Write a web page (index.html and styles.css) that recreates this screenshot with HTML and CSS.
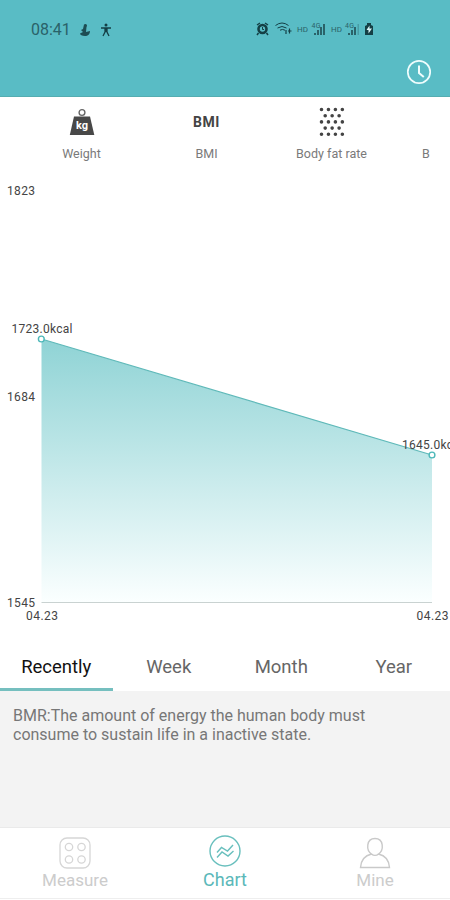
FILE: index.html
```html
<!DOCTYPE html>
<html lang="en">

<head>
    <meta charset="UTF-8">
    <meta name="viewport" content="width=device-width, initial-scale=1">
    <title>Chart</title>
    <link rel="stylesheet" href="styles.css">
</head>

<body>

    <header class="header">
        <div class="status-bar">
            <div class="status-left">
                <span class="time">08:41</span>
                <svg width="12" height="14" viewBox="0 0 12 14">
                    <path d="M5 1.5c2-1.500 4 .5 2.500 2.500L7 9l4-1c0 3-2 5-5 5s-5-1-5-2.500L4 9l-2-2 2-1z" fill="#1d4d53" />
                </svg>
                <svg class="person" width="12" height="14" viewBox="0 0 12 14">
                    <circle cx="6" cy="2" r="1.500" fill="#143f45" />
                    <path d="M1 5h10M6 5v4M5 5v4l-2 4M7 5v4l2 4" fill="none" stroke="#143f45" stroke-width="1.300" />
                </svg>
            </div>
            <div class="status-right">
                <svg width="120" height="16" viewBox="0 0 120 16">
                    <g fill="none" stroke="#143f45">
                        <circle cx="7.500" cy="8" r="4" stroke-width="2.600" />
                        <path d="M2 4l3-2M10 2l3 2M3.500 12L2 14M11.500 12l1.500 2" stroke-width="1.500" />
                        <path d="M7.500 6v2.500H9" stroke-width="1" />
                        <path d="M20.500 4.500q6.500-5 13 0M22.500 7q4.500-3 9 0M25 9.200q2.500-1.500 5 0" stroke-width="1" />
                        <path d="M31 9v4M34.500 7.500v5M33 10h3.500" stroke-width="1.200" />
                    </g>
                    <g class="signal-text">
                        <text x="42" y="10.500" font-size="8" textLength="11">HD</text>
                        <text x="56.500" y="6.500" font-size="7" textLength="9">4G</text>
                        <text x="76" y="10.500" font-size="8" textLength="11">HD</text>
                        <text x="90" y="6.500" font-size="7" textLength="9">4G</text>
                    </g>
                    <g fill="#2a6269">
                        <path d="M59 12h2v2h-2zM62 9h2v5h-2zM65 6h2v8h-2zM68 3h2v11h-2z" />
                        <path d="M93 12h2v2h-2zM96 9h2v5h-2zM99 6h2v8h-2z" />
                        <path d="M102.500 3h1.500v11h-1.500z" opacity=".35" />
                    </g>
                    <path d="M110 5l2-1V2h4v2l2 1v9h-8z" fill="#143f45" />
                    <path d="M114.500 4.500L111.500 9h2v3.500l3.500-5h-2.500z" fill="#d9f3f5" />
                </svg>
            </div>
        </div>
        <div class="title-bar">
            <svg width="26" height="26" viewBox="0 0 26 26" fill="none" stroke="#effdfd">
                <circle cx="13" cy="13" r="11.200" stroke-width="1.700" />
                <path d="M13 6.500V14l4.800 4" stroke-width="2" />
            </svg>
        </div>
    </header>

    <div class="metrics">
        <div class="metric">
            <div class="metric-icon">
                <svg width="26" height="28" viewBox="0 0 26 28">
                    <circle cx="13" cy="4.500" r="2.900" fill="none" stroke="#666" stroke-width="1.400" />
                    <path d="M5 8.500h16L25.300 27H.8z" fill="#484848" />
                    <text class="kg" x="13" y="20.500">kg</text>
                </svg>
            </div>
            <span>Weight</span>
        </div>
        <div class="metric">
            <div class="metric-icon"><b>BMI</b></div>
            <span>BMI</span>
        </div>
        <div class="metric">
            <div class="metric-icon">
                <svg width="26" height="30" viewBox="0 0 26 30" fill="none" stroke="#444" stroke-width="3.600" stroke-linecap="round">
                    <path d="M2.500 2.500h22M2.500 14.900h22M2.500 27.300h22" stroke-dasharray="0 6.950" />
                    <path d="M6.200 8.700h14.500M6.200 21.100h14.500" stroke-dasharray="0 6.950" />
                </svg>
            </div>
            <span>Body fat rate</span>
        </div>
        <div class="metric metric-cut">
            <div class="metric-icon"></div>
            <span>B</span>
        </div>
    </div>

    <div class="chart">
        <svg width="450" height="470" viewBox="0 170 450 470">
            <defs>
                <linearGradient id="area" x1="0" y1="339" x2="0" y2="602" gradientUnits="userSpaceOnUse">
                    <stop offset="0" stop-color="#8fd3d5" />
                    <stop offset="1" stop-color="#fbffff" />
                </linearGradient>
            </defs>
            <path d="M41.500 339L432 455V602H41.500z" fill="url(#area)" />
            <path d="M41.500 602.500H432" stroke="#c9d2d1" />
            <path d="M41.500 339L432 455" stroke="#5fb9b9" stroke-width="1.200" />
            <g fill="#fff" stroke="#4db8b9" stroke-width="1.400">
                <circle cx="41.300" cy="339" r="2.900" />
                <circle cx="432" cy="455" r="2.900" />
            </g>
            <g class="chart-text">
                <text x="7" y="195" textLength="28">1823</text>
                <text x="7" y="401" textLength="28">1684</text>
                <text x="7" y="607" textLength="28">1545</text>
                <text x="26" y="620" textLength="32">04.23</text>
                <text x="416.500" y="620" textLength="32">04.23</text>
                <text x="11.500" y="333" textLength="61">1723.0kcal</text>
                <text x="402" y="449" textLength="61">1645.0kcal</text>
            </g>
        </svg>
    </div>

    <div class="tabs">
        <div class="tab active">Recently</div>
        <div class="tab">Week</div>
        <div class="tab">Month</div>
        <div class="tab">Year</div>
    </div>

    <div class="description">
        BMR:The amount of energy the human body must<br>
        consume to sustain life in a inactive state.
    </div>

    <nav class="bottom-nav">
        <div class="nav-item">
            <svg width="34" height="34" viewBox="0 0 34 34" fill="none" stroke="#d6d6d6" stroke-width="1.300">
                <rect x="2" y="3" width="30" height="30" rx="7" />
                <circle cx="11" cy="12" r="3.700" />
                <circle cx="23.500" cy="12" r="3.700" />
                <circle cx="11" cy="24.500" r="3.700" />
                <circle cx="23.500" cy="24.500" r="3.700" />
            </svg>
            <span>Measure</span>
        </div>
        <div class="nav-item active">
            <svg width="34" height="34" viewBox="0 0 34 34" fill="none" stroke="#68bfbd" stroke-width="1.400">
                <circle cx="17" cy="16" r="15" />
                <path d="M9 17.500l4.500-5 6 3.500 5.500-6M9 22.500l5-5.500 6 4 5.500-5" />
            </svg>
            <span>Chart</span>
        </div>
        <div class="nav-item">
            <svg width="34" height="34" viewBox="0 0 34 34" fill="none" stroke="#c9c9c9" stroke-width="1.400">
                <path d="M13.500 19C8 15.500 8 3.500 17 3.500S26 15.500 20.500 19C27 20.500 31 25 31.500 32.500h-29C3 25 7 20.500 13.500 19c2 1.800 5 1.800 7 0" />
            </svg>
            <span>Mine</span>
        </div>
    </nav>

</body>

</html>
```
FILE: styles.css
```css
body {
    font-family: Roboto, Arial, sans-serif;
    background-color: #fff;
    margin: 0;
    height: 900px;
    display: flex;
    flex-direction: column;
    overflow: hidden;
}

svg {
    display: block;
    flex-shrink: 0;
}

/* Teal header with the phone status bar */
.header {
    background-color: #59bcc5;
    height: 96px;
    border-bottom: 1px solid #55adb1;
    flex-shrink: 0;
}

.status-bar {
    display: flex;
    justify-content: space-between;
    padding: 21px 75px 0 31px;
    height: 38px;
    box-sizing: border-box;
}

.status-left {
    display: flex;
    align-items: center;
    height: 17px;
}

.time {
    font-size: 16px;
    color: #2a6269;
    width: 48px;
}

.person {
    margin-left: 9px;
}

.signal-text {
    font-family: Roboto, Arial, sans-serif;
    fill: #2a6269;
}

.title-bar {
    display: flex;
    justify-content: flex-end;
    padding: 21px 18px 0 0;
}

.metrics {
    display: flex;
    height: 73px;
    padding-left: 19px;
    flex-shrink: 0;
    overflow: hidden;
}

.metric {
    width: 125px;
    flex-shrink: 0;
    display: flex;
    flex-direction: column;
    align-items: center;
    font-size: 12.5px;
    line-height: 16px;
    color: #7a7a7a;
}

.metric-icon {
    height: 49px;
    display: flex;
    align-items: center;
}

.metric-icon b {
    font-size: 14px;
    letter-spacing: 0.6px;
    color: #444;
}

.metric-cut {
    align-items: flex-start;
    padding-left: 28px;
}

.kg {
    font-family: Roboto, Arial, sans-serif;
    font-size: 11px;
    font-weight: bold;
    fill: #fff;
    text-anchor: middle;
}

.chart {
    height: 474px;
    flex-shrink: 0;
}

.chart-text {
    font-family: Roboto, Arial, sans-serif;
    font-size: 12px;
    fill: #444;
}

/* Period tabs */
.tabs {
    display: flex;
    height: 47px;
    flex-shrink: 0;
}

.tab {
    flex: 1;
    text-align: center;
    font-size: 18.5px;
    line-height: 46px;
    color: #666;
    box-sizing: border-box;
}

.tab.active {
    color: #111;
    border-bottom: 3px solid #75bfbf;
}

.description {
    background-color: #f3f3f3;
    height: 121px;
    padding: 15px 13px 0;
    font-size: 16px;
    line-height: 19px;
    color: #777;
    flex-shrink: 0;
}

/* Bottom navigation */
.bottom-nav {
    display: flex;
    height: 70px;
    border-top: 1px solid #eaeaea;
    border-bottom: 1px solid #eee;
}

.nav-item {
    flex: 1;
    display: flex;
    flex-direction: column;
    align-items: center;
    padding-top: 7px;
    font-size: 17px;
    line-height: 22px;
    color: #ccc;
}

.nav-item.active {
    font-size: 18px;
    color: #5bb8b9;
}
```
